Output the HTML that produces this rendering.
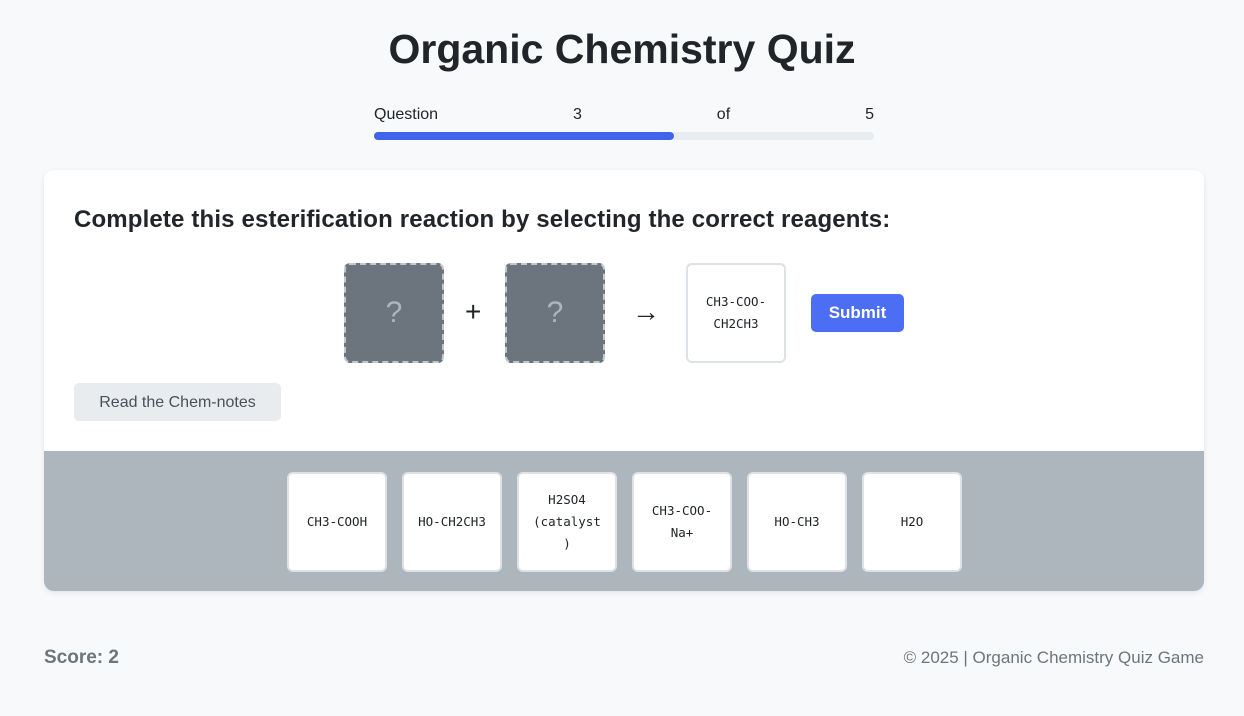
<!DOCTYPE html>
<html><head><style>
*{box-sizing:border-box;margin:0;padding:0}
body{width:1244px;height:716px;background:#f8f9fa;font-family:"Liberation Sans",sans-serif;color:#212529;position:relative;overflow:hidden}
.abs{position:absolute}
h1{position:absolute;left:0;width:1244px;top:26px;text-align:center;font-size:41px;font-weight:bold;color:#212529}
.prog{left:374px;width:500px;top:106px;display:flex;justify-content:space-between;font-size:16px}
.bar{left:374px;top:132px;width:500px;height:8px;background:#e9ecef;border-radius:4px}
.bar div{width:300px;height:8px;background:#4263eb;border-radius:4px}
.card{left:44px;top:170px;width:1160px;height:421px;background:#fff;border-radius:10px;overflow:hidden;box-shadow:0 2px 6px rgba(0,0,0,.08)}
.q{left:30px;top:36px;font-size:24px;font-weight:bold;letter-spacing:0.15px}
.slot{width:100px;height:100px;border:2px dashed #c3c8cd;background:#6c757d;border-radius:6px;color:#adb5bd;font-size:30px;display:flex;align-items:center;justify-content:center;top:93px}
.mono{font-family:"DejaVu Sans Mono","Liberation Mono",monospace;font-size:12.5px;line-height:22px;text-align:center}
.tile{width:100px;height:100px;background:#fff;border:2px solid #dee2e6;border-radius:6px;display:flex;align-items:center;justify-content:center;padding:8px 13px;overflow-wrap:anywhere}
.tray{left:0;top:281px;width:1160px;height:140px;background:#adb5bd}
</style></head><body>
<h1>Organic Chemistry Quiz</h1>
<div class="abs prog"><span>Question</span><span>3</span><span>of</span><span>5</span></div>
<div class="abs bar"><div></div></div>
<div class="abs card">
 <div class="abs q">Complete this esterification reaction by selecting the correct reagents:</div>
 <div class="abs slot" style="left:300px">?</div>
 <div class="abs" style="left:421px;top:126px;font-size:28px">+</div>
 <div class="abs slot" style="left:461px">?</div>
 <div class="abs" style="left:588px;top:126px;font-size:28px">→</div>
 <div class="abs tile mono" style="left:642px;top:93px">CH3-COO-CH2CH3</div>
 <div class="abs" style="left:767px;top:124px;width:93px;height:38px;background:#4c6ef5;border-radius:5px;color:#fff;font-weight:bold;font-size:17px;display:flex;align-items:center;justify-content:center">Submit</div>
 <div class="abs" style="left:30px;top:213px;width:207px;height:38px;background:#e9ecef;border-radius:5px;color:#495057;font-size:16px;display:flex;align-items:center;justify-content:center;padding-top:2px">Read the Chem-notes</div>
 <div class="abs tray">
  <div class="abs tile mono" style="left:243px;top:21px">CH3-COOH</div>
  <div class="abs tile mono" style="left:358px;top:21px">HO-CH2CH3</div>
  <div class="abs tile mono" style="left:473px;top:21px">H2SO4 (catalyst)</div>
  <div class="abs tile mono" style="left:588px;top:21px">CH3-COO-Na+</div>
  <div class="abs tile mono" style="left:703px;top:21px">HO-CH3</div>
  <div class="abs tile mono" style="left:818px;top:21px">H2O</div>
 </div>
</div>
<div class="abs" style="left:44px;top:647px;font-size:19px;font-weight:bold;color:#6c757d">Score: 2</div>
<div class="abs" style="right:40px;top:648px;font-size:17px;color:#6c757d">© 2025 | Organic Chemistry Quiz Game</div>
</body></html>
